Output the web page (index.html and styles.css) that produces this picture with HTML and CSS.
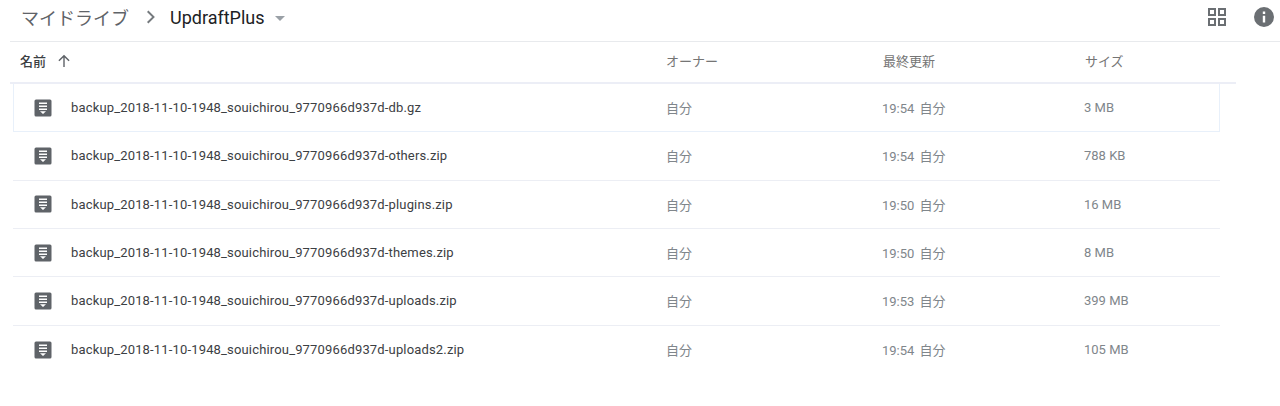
FILE: index.html
```html
<!DOCTYPE html>
<html lang="ja">
<head>
    <meta charset="UTF-8">
    <title>UpdraftPlus - Google ドライブ</title>
    <link rel="stylesheet" href="styles.css">
</head>
<body>
    <div class="topbar">
        <div class="path">
            <span class="path-root">マイドライブ</span>
            <svg class="path-sep" width="24" height="24" viewBox="0 0 24 24"><path d="M9.400 5.500 8 6.900l5.100 5.100L8 17.100l1.400 1.400 6.500-6.500z"/></svg>
            <span class="path-current">UpdraftPlus</span>
            <span class="path-caret"></span>
        </div>
        <div class="actions">
            <svg class="grid-icon" width="20" height="20" viewBox="0 0 20 20">
                <path d="M1 1h8v8H1zM3 3v4h4V3zM11 1h8v8h-8zM13 3v4h4V3zM1 11h8v8H1zM3 13v4h4v-4zM11 11h8v8h-8zM13 13v4h4v-4z" fill-rule="evenodd"/>
            </svg>
            <svg class="info-icon" width="20" height="20" viewBox="0 0 20 20">
                <path d="M10 0a10 10 0 1 0 0 20 10 10 0 0 0 0-20zM8.800 4.600h2.400V7H8.800zM8.800 8.800h2.400v6.600H8.800z" fill-rule="evenodd"/>
            </svg>
        </div>
    </div>

    <div class="list">
        <div class="list-head">
            <div class="col-name head-name">名前
                <svg width="14" height="14" viewBox="0 0 14 14"><path d="M6.300 13V3.400L2.400 7.300l-1-1L7 .8l5.600 5.500-1 1-3.900-3.900V13z"/></svg>
            </div>
            <div class="col-owner">オーナー</div>
            <div class="col-date">最終更新</div>
            <div class="col-size">サイズ</div>
        </div>

        <div class="rows">
            <div class="row row-selected">
                <div class="col-name">
                    <svg class="file-icon" viewBox="0 0 18 18"><use href="#zip"/></svg>
                    <span>backup_2018-11-10-1948_souichirou_9770966d937d-db.gz</span>
                </div>
                <div class="col-owner">自分</div>
                <div class="col-date">19:54 自分</div>
                <div class="col-size">3 MB</div>
            </div>
            <div class="row">
                <div class="col-name">
                    <svg class="file-icon" viewBox="0 0 18 18"><use href="#zip"/></svg>
                    <span>backup_2018-11-10-1948_souichirou_9770966d937d-others.zip</span>
                </div>
                <div class="col-owner">自分</div>
                <div class="col-date">19:54 自分</div>
                <div class="col-size">788 KB</div>
            </div>
            <div class="row">
                <div class="col-name">
                    <svg class="file-icon" viewBox="0 0 18 18"><use href="#zip"/></svg>
                    <span>backup_2018-11-10-1948_souichirou_9770966d937d-plugins.zip</span>
                </div>
                <div class="col-owner">自分</div>
                <div class="col-date">19:50 自分</div>
                <div class="col-size">16 MB</div>
            </div>
            <div class="row">
                <div class="col-name">
                    <svg class="file-icon" viewBox="0 0 18 18"><use href="#zip"/></svg>
                    <span>backup_2018-11-10-1948_souichirou_9770966d937d-themes.zip</span>
                </div>
                <div class="col-owner">自分</div>
                <div class="col-date">19:50 自分</div>
                <div class="col-size">8 MB</div>
            </div>
            <div class="row">
                <div class="col-name">
                    <svg class="file-icon" viewBox="0 0 18 18"><use href="#zip"/></svg>
                    <span>backup_2018-11-10-1948_souichirou_9770966d937d-uploads.zip</span>
                </div>
                <div class="col-owner">自分</div>
                <div class="col-date">19:53 自分</div>
                <div class="col-size">399 MB</div>
            </div>
            <div class="row row-last">
                <div class="col-name">
                    <svg class="file-icon" viewBox="0 0 18 18"><use href="#zip"/></svg>
                    <span>backup_2018-11-10-1948_souichirou_9770966d937d-uploads2.zip</span>
                </div>
                <div class="col-owner">自分</div>
                <div class="col-date">19:54 自分</div>
                <div class="col-size">105 MB</div>
            </div>
        </div>
    </div>

    <svg class="defs" width="0" height="0">
        <symbol id="zip" viewBox="0 0 18 18">
            <path fill-rule="evenodd" d="M2 .5h14A1.500 1.500 0 0 1 17.500 2v14a1.500 1.500 0 0 1-1.500 1.500H2A1.500 1.500 0 0 1 .5 16V2A1.500 1.500 0 0 1 2 .5zM5 3.500v1.600h8V3.500zM5 6.500v1.600h8V6.500zM5 9.500v1.600h8V9.500zM6 12.200 9 15l3-2.800z"/>
        </symbol>
    </svg>
</body>
</html>
```

FILE: styles.css
```css
body {
    margin: 0;
    height: 406px;
    overflow: hidden;
    background-color: #fff;
    font-family: Roboto, "Noto Sans CJK JP", sans-serif;
    color: #757575;
}

.topbar {
    display: flex;
    align-items: flex-start;
    justify-content: space-between;
    height: 41px;
    margin-left: 10px;
    border-bottom: 1px solid #e8eaed;
}

.path {
    display: flex;
    align-items: center;
    height: 34px;
    padding-left: 11px;
}

.path-root {
    font-size: 18px;
    color: #5f6368;
    width: 108px;
}

.path-sep {
    fill: #757a7e;
    margin-left: 10px;
}

.path-current {
    font-size: 18px;
    color: #202124;
    margin-left: 7px;
}

.path-caret {
    margin-left: 10px;
    margin-top: 2px;
    border-left: 5px solid transparent;
    border-right: 5px solid transparent;
    border-top: 5px solid #9aa0a6;
}

.actions {
    display: flex;
    align-items: center;
    gap: 27px;
    padding-right: 6px;
    height: 34px;
}

.grid-icon,
.info-icon {
    fill: #6b6f73;
}

.list {
    width: 1226px;
    margin-left: 10px;
}

.list-head,
.row {
    display: flex;
    align-items: center;
}

.list-head {
    height: 37px;
    padding-bottom: 3px;
    border-bottom: 2px solid #eceef6;
    font-size: 13px;
}

.row {
    box-sizing: border-box;
    width: 1207px;
    height: 48.33px;
    margin-left: 3px;
    border-bottom: 1px solid #eceef4;
    font-size: 13px;
    color: #80868b;
}

.row-selected {
    border: 1px solid #e8f0fa;
    border-top: 0;
}

.row-last {
    border-bottom: 0;
}

.col-name {
    display: flex;
    align-items: center;
    flex-shrink: 0;
}

.head-name {
    box-sizing: border-box;
    width: 656px;
    padding-left: 10px;
    gap: 11px;
    font-weight: 500;
    color: #3c4043;
}

.head-name svg {
    fill: #5f6368;
}

.list-head .col-owner { width: 217px; }
.list-head .col-date { width: 202px; }

.row .col-name {
    box-sizing: border-box;
    width: 653px;
    padding-left: 21px;
    letter-spacing: 0.16px;
    color: #3c4043;
}

.row-selected .col-name {
    width: 652px;
    padding-left: 20px;
}

.row .col-owner { width: 216px; }
.row .col-date { width: 202px; word-spacing: 2px; }

.file-icon {
    width: 18px;
    height: 18px;
    margin-right: 19px;
    fill: #5f6368;
    flex-shrink: 0;
}

.defs {
    display: block;
}
```
